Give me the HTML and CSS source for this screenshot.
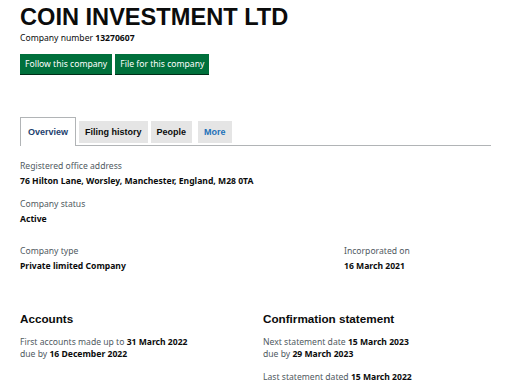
FILE: index.html
```html
<!DOCTYPE html>
<html>
<head>
<meta charset="utf-8">
<link rel="stylesheet" href="styles.css">
</head>
<body>
<div class="page">
  <h1 class="title">COIN INVESTMENT LTD</h1>
  <p class="number">Company number <strong>13270607</strong></p>
  <div class="actions">
    <a class="btn">Follow this company</a>
    <a class="btn">File for this company</a>
  </div>
  <ul class="tabs">
    <li class="tab active">Overview</li>
    <li class="tab">Filing history</li>
    <li class="tab">People</li>
    <li class="tab more">More</li>
  </ul>
  <dl class="field">
    <dt>Registered office address</dt>
    <dd>76 Hilton Lane, Worsley, Manchester, England, M28 0TA</dd>
  </dl>
  <dl class="field">
    <dt>Company status</dt>
    <dd>Active</dd>
  </dl>
  <div class="row two">
    <dl class="field">
      <dt>Company type</dt>
      <dd>Private limited Company</dd>
    </dl>
    <dl class="field">
      <dt>Incorporated on</dt>
      <dd>16 March 2021</dd>
    </dl>
  </div>
  <div class="row sections">
    <section class="sec">
      <h2>Accounts</h2>
      <p>First accounts made up to <strong>31 March 2022</strong><br>due by <strong>16 December 2022</strong></p>
    </section>
    <section class="sec">
      <h2>Confirmation statement</h2>
      <p>Next statement date <strong>15 March 2023</strong><br>due by <strong>29 March 2023</strong></p>
      <p class="last">Last statement dated <strong>15 March 2022</strong></p>
    </section>
  </div>
</div>
</body>
</html>
```
FILE: styles.css
```css
* { box-sizing: border-box; }
html, body { margin: 0; padding: 0; background: #fff; }
body { font-family: "Noto Sans", "Liberation Sans", sans-serif; color: #0b0c0c; }
.page { padding: 4px 20px 0 20px; width: 512px; }
.title {
  font-family: "Liberation Sans", Arial, sans-serif;
  font-weight: 700;
  font-size: 23.6px;
  line-height: 26px;
  margin: 0;
}
.number { font-size: 8.6px; line-height: 12px; margin: 2px 0 0 0; color: #0b0c0c; }
.number strong { font-weight: 700; }
.actions { display: flex; gap: 3px; margin-top: 10px; }
.btn {
  display: block;
  background: #00703c;
  color: #fff;
  font-size: 8.6px;
  line-height: 12px;
  padding: 4px 5px 3px 5px;
  height: 20px;
  box-shadow: 0 1px 0 #002d18;
}
.tabs {
  list-style: none;
  margin: 44px 0 0 0;
  padding: 0;
  display: flex;
  gap: 3px;
  border-bottom: 1px solid #b1b4b6;
  width: 471px;
  align-items: flex-end;
  height: 28px;
}
.tab {
  background: #e5e5e5;
  font-family: "Liberation Sans", Arial, sans-serif;
  font-weight: 700;
  font-size: 9px;
  color: #0b0c0c;
  height: 22px;
  line-height: 22px;
  padding: 0 6px;
  margin-bottom: 2px;
}
.tab.active {
  background: #fff;
  border: 1px solid #b1b4b6;
  border-bottom: 0;
  height: 29px;
  line-height: 28px;
  padding: 0 7px;
  margin-bottom: -1px;
  color: #1d3f6e;
}
.tab.more { color: #1d70b8; margin-left: 3px; }
.field { margin: 0; }
.field dt { font-size: 8.6px; line-height: 12px; color: #505a5f; }
.field dd { margin: 0; font-size: 8.6px; line-height: 12px; font-weight: 700; margin-top: 3px; }
.page > .field:first-of-type { margin-top: 14px; }
.page > .field + .field { margin-top: 11px; }
.row { display: flex; }
.two { margin-top: 20px; }
.two .field:first-child { width: 324px; flex: none; }
.sections { margin-top: 40px; }
.sec { width: 243px; flex: none; }
.sec h2 {
  font-family: "Liberation Sans", Arial, sans-serif;
  font-size: 11.7px;
  line-height: 14px;
  margin: 0;
  font-weight: 700;
}
.sec p { font-size: 8.6px; line-height: 12px; margin: 10px 0 0 0; color: #505a5f; }
.sec p strong { color: #0b0c0c; font-weight: 700; }
.sec p.last { margin-top: 11px; }
```
